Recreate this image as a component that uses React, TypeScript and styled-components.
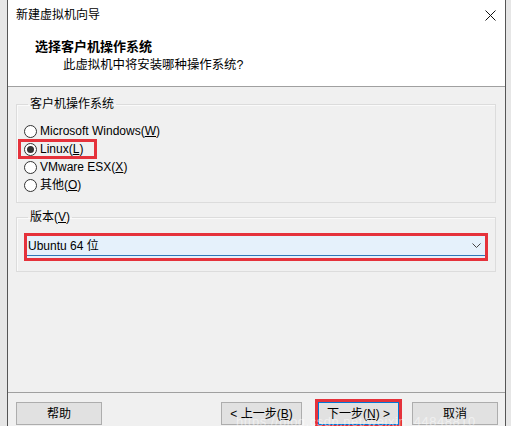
import React from "react";
import styled, { createGlobalStyle } from "styled-components";

const Global = createGlobalStyle`
  html, body { margin: 0; padding: 0; }
  body {
    background: #e6e6e6;
    overflow: hidden;
    height: 426px;
    font-family: "Liberation Sans", "Noto Sans CJK SC", sans-serif;
    font-size: 12px;
    color: #000;
  }
`;

const Stage = styled.div`
  position: relative;
  padding-left: 7px;
  width: 511px;
  height: 426px;
  box-sizing: border-box;
  overflow: hidden;
`;

const Window = styled.div`
  width: 499px;
  height: 440px;
  box-sizing: border-box;
  border-left: 1px solid #555;
  border-right: 1px solid #555;
  background: #f0f0f0;
  display: flex;
  flex-direction: column;
`;

const TitleBar = styled.div`
  height: 30px;
  background: #fff;
  display: flex;
  align-items: center;
  justify-content: space-between;
  padding: 0 9px 0 8px;
`;

const TitleText = styled.span`
  font-size: 12px;
  line-height: 16px;
`;

const CloseBtn = styled.div`
  width: 12px;
  height: 12px;
  display: flex;
  align-items: center;
  justify-content: center;
`;

const Header = styled.div`
  background: #fff;
  height: 57px;
  box-sizing: border-box;
  border-bottom: 1px solid #a0a0a0;
  padding: 9px 0 0 27px;
  display: flex;
  flex-direction: column;
  gap: 2px;
`;

const HeaderTitle = styled.div`
  font-weight: bold;
  font-size: 13px;
  line-height: 16px;
`;

const HeaderSub = styled.div`
  font-size: 12.4px;
  line-height: 16px;
  padding-left: 28px;
`;

const Body = styled.div`
  flex: 1;
  display: flex;
  flex-direction: column;
  padding: 9px 9px 0 8px;
`;

const Group = styled.fieldset<{ $padTop: number; $padBottom: number }>`
  margin: 0;
  border: 1px solid #dcdcdc;
  box-shadow: inset 1px 1px 0 #fafafa;
  padding: ${(p) => p.$padTop}px 7px ${(p) => p.$padBottom}px 7px;
  min-width: 0;
  & + & { margin-top: 6px; }
`;

const Legend = styled.legend`
  margin-left: 4px;
  padding: 0 2px;
  font-size: 12px;
  line-height: 16px;
`;

const RadioRow = styled.label<{ $marked?: boolean }>`
  position: relative;
  display: flex;
  align-items: center;
  height: 18px;
  gap: 3px;
  width: max-content;
  &::after {
    content: "";
    display: ${(p) => (p.$marked ? "block" : "none")};
    position: absolute;
    left: -6px;
    top: -1px;
    width: 79px;
    height: 20px;
    box-sizing: border-box;
    border: 3px solid #e5323b;
  }
`;

const RadioCircle = styled.span<{ $checked?: boolean }>`
  width: 13px;
  height: 13px;
  box-sizing: border-box;
  border: 1px solid #333;
  border-radius: 50%;
  background: #fff;
  display: flex;
  align-items: center;
  justify-content: center;
  &::before {
    content: "";
    display: ${(p) => (p.$checked ? "block" : "none")};
    width: 7px;
    height: 7px;
    border-radius: 50%;
    background: #333;
  }
`;

const RadioText = styled.span`
  font-size: 12px;
  line-height: 16px;
`;

const MarkedBox = styled.div`
  border: 3px solid #e5323b;
  background: #e5f1fb;
  padding-bottom: 2px;
`;

const Combo = styled.div`
  height: 19px;
  background: #e5f1fb;
  border-bottom: 1px solid #2f78b8;
  display: flex;
  align-items: center;
  justify-content: space-between;
  padding: 0 4px 0 1px;
`;

const ComboText = styled.span`
  font-size: 12px;
  line-height: 16px;
`;

const Footer = styled.div`
  height: 48px;
  box-sizing: border-box;
  border-top: 1px solid #a0a0a0;
  display: flex;
  align-items: flex-start;
  padding: 9px 7px 0 8px;
`;

const Button = styled.div<{ $w: number; $primary?: boolean; $marked?: boolean }>`
  width: ${(p) => p.$w}px;
  height: 23px;
  box-sizing: border-box;
  background: #e1e1e1;
  border: 1px solid ${(p) => (p.$primary ? "#0078d7" : "#adadad")};
  display: flex;
  align-items: center;
  justify-content: center;
  font-size: 12px;
  line-height: 16px;
  outline: ${(p) => (p.$marked ? "3px solid #e5323b" : "none")};
`;

const Spacer = styled.div`
  flex: 1;
`;

const Gap = styled.div<{ $w: number }>`
  width: ${(p) => p.$w}px;
  flex: none;
`;

const Watermark = styled.div`
  position: absolute;
  left: 236px;
  top: 414px;
  font-size: 13px;
  color: rgba(255, 255, 255, 0.5);
  letter-spacing: 0.5px;
  white-space: nowrap;
  pointer-events: none;
`;

const options = [
  { label: "Microsoft Windows(", key: "W", checked: false },
  { label: "Linux(", key: "L", checked: true },
  { label: "VMware ESX(", key: "X", checked: false },
  { label: "其他(", key: "O", checked: false },
];

export default function App() {
  return (
    <>
      <Global />
      <Stage>
        <Window>
          <TitleBar>
            <TitleText>新建虚拟机向导</TitleText>
            <CloseBtn>
              <svg width="11" height="11" viewBox="0 0 11 11">
                <path d="M0.5 0.5 L10.5 10.5 M10.5 0.5 L0.5 10.5" stroke="#111" strokeWidth="1" fill="none" />
              </svg>
            </CloseBtn>
          </TitleBar>
          <Header>
            <HeaderTitle>选择客户机操作系统</HeaderTitle>
            <HeaderSub>此虚拟机中将安装哪种操作系统?</HeaderSub>
          </Header>
          <Body>
            <Group $padTop={10} $padBottom={8}>
              <Legend>客户机操作系统</Legend>
              {options.map((o) => (
                <RadioRow key={o.key} $marked={o.checked}>
                  <RadioCircle $checked={o.checked} />
                  <RadioText>
                    {o.label}
                    <u>{o.key}</u>)
                  </RadioText>
                </RadioRow>
              ))}
            </Group>
            <Group $padTop={8} $padBottom={10}>
              <Legend>
                版本(<u>V</u>)
              </Legend>
              <MarkedBox>
                <Combo>
                  <ComboText>Ubuntu 64 位</ComboText>
                  <svg width="9" height="5" viewBox="0 0 9 5">
                    <path d="M0.5 0.5 L4.5 4.5 L8.5 0.5" stroke="#444" strokeWidth="1" fill="none" />
                  </svg>
                </Combo>
              </MarkedBox>
            </Group>
            <Spacer />
          </Body>
          <Footer>
            <Button $w={86}>帮助</Button>
            <Spacer />
            <Button $w={81}>
              &lt; 上一步(<u>B</u>)
            </Button>
            <Gap $w={16} />
            <Button $w={81} $primary $marked>
              下一步(<u>N</u>) &gt;
            </Button>
            <Gap $w={13} />
            <Button $w={86}>取消</Button>
          </Footer>
        </Window>
        <Watermark>https://blog.csdn.net/weixin_44848810</Watermark>
      </Stage>
    </>
  );
}
